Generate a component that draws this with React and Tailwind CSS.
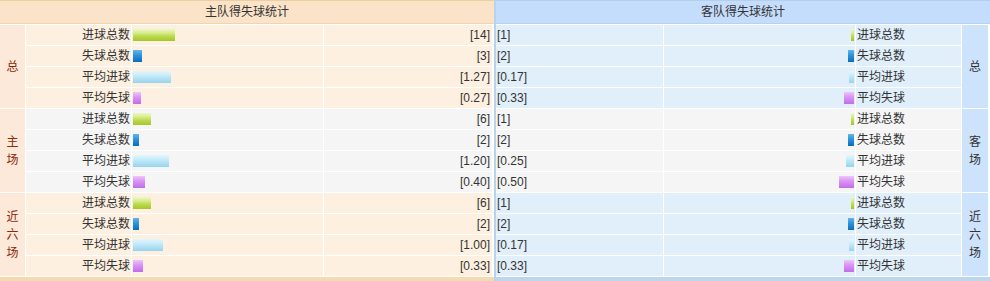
import React from "react";

const labels = ["进球总数", "失球总数", "平均进球", "平均失球"];

const barClass = [
  "bg-[linear-gradient(to_bottom,#edf7c6_0%,#d9ed92_30%,#bcdb4c_60%,#a4c62a_100%)]",
  "bg-[linear-gradient(to_bottom,#62b6ea_0%,#2f92d8_45%,#086cc0_100%)]",
  "bg-[linear-gradient(to_bottom,#e4f7fd_0%,#c4eaf9_40%,#96d3ee_100%)]",
  "bg-[linear-gradient(to_bottom,#efc6fb_0%,#da96f5_40%,#c36ce9_100%)]",
];

// totals scale x3, averages x30
const groups = [
  { home: ["总"], away: ["总"], h: [14, 3, 1.27, 0.27], a: [1, 2, 0.17, 0.33], grey: false },
  { home: ["主", "场"], away: ["客", "场"], h: [6, 2, 1.2, 0.4], a: [1, 2, 0.25, 0.5], grey: true },
  { home: ["近", "六", "场"], away: ["近", "六", "场"], h: [6, 2, 1.0, 0.33], a: [1, 2, 0.17, 0.33], grey: false },
];

const fmt = (v, i) => (i < 2 ? String(v) : v.toFixed(2));
const barW = (v, i) => Math.round(i < 2 ? v * 3 : v * 30);

const Bar = ({ v, i }) => (
  <span className={"block h-[12px] " + barClass[i]} style={{ width: barW(v, i) }} />
);

const App = () => {
  return (
    <div className="flex w-[990px] h-[281px] bg-white text-[12px] text-[#333] font-['Liberation_Sans','Noto_Sans_CJK_SC',sans-serif] leading-none">
      {/* home side */}
      <div className="flex flex-col w-[494px] gap-[1px]">
        <div className="h-[24px] border-t border-b border-t-[#ebcf9d] border-b-[#f0d6ae] bg-[#fae3c8] flex items-center justify-center">
          主队得失球统计
        </div>
        {groups.map((g, gi) => (
          <div key={gi} className="flex gap-[1px]">
            <div className="w-[25px] bg-[#fde9da] text-[#8b2a0a] flex flex-col items-center justify-center leading-[18px]">
              {g.home.map((c, ci) => (
                <span key={ci}>{c}</span>
              ))}
            </div>
            <div className="flex flex-col gap-[1px]">
              {labels.map((l, i) => (
                <div key={i} className="grid grid-cols-[105px_191px_168px] gap-x-[1px] h-[20px]">
                  <div className={"flex items-center justify-end pr-[1px] " + (g.grey ? "bg-[#f5f5f5]" : "bg-[#fdf0e0]")}>{l}</div>
                  <div className={"flex items-center pl-[1px] " + (g.grey ? "bg-[#f5f5f5]" : "bg-[#fdf0e0]")}>
                    <Bar v={g.h[i]} i={i} />
                  </div>
                  <div className={"flex items-center justify-end pr-[2px] " + (g.grey ? "bg-[#f5f5f5]" : "bg-[#fdf0e0]")}>[{fmt(g.h[i], i)}]</div>
                </div>
              ))}
            </div>
          </div>
        ))}
        <div className="flex-1 bg-[#f4dab0]" />
      </div>

      {/* away side */}
      <div className="flex flex-col flex-1 gap-[1px] border-l-2 border-l-[#b7d4ea]">
        <div className="h-[24px] border-t border-b border-t-[#b4d0e8] border-b-[#b9d3ec] bg-[#c5ddfc] flex items-center justify-center">
          客队得失球统计
        </div>
        {groups.map((g, gi) => (
          <div key={gi} className="flex gap-[1px] pr-[2px]">
            <div className="flex flex-col gap-[1px]">
              {labels.map((l, i) => (
                <div key={i} className="grid grid-cols-[167px_191px_105px] gap-x-[1px] h-[20px]">
                  <div className={"flex items-center pl-[1px] " + (g.grey ? "bg-[#f5f5f5]" : "bg-[#e1effb]")}>[{fmt(g.a[i], i)}]</div>
                  <div className={"flex items-center justify-end pr-[1px] " + (g.grey ? "bg-[#f5f5f5]" : "bg-[#e1effb]")}>
                    <Bar v={g.a[i]} i={i} />
                  </div>
                  <div className={"flex items-center pl-[1px] " + (g.grey ? "bg-[#f5f5f5]" : "bg-[#e1effb]")}>{l}</div>
                </div>
              ))}
            </div>
            <div className="flex-1 bg-[#cde2fb] flex flex-col items-center justify-center leading-[18px]">
              {g.away.map((c, ci) => (
                <span key={ci}>{c}</span>
              ))}
            </div>
          </div>
        ))}
        <div className="flex-1 bg-[#bdd6ec]" />
      </div>
    </div>
  );
};

export default App;
